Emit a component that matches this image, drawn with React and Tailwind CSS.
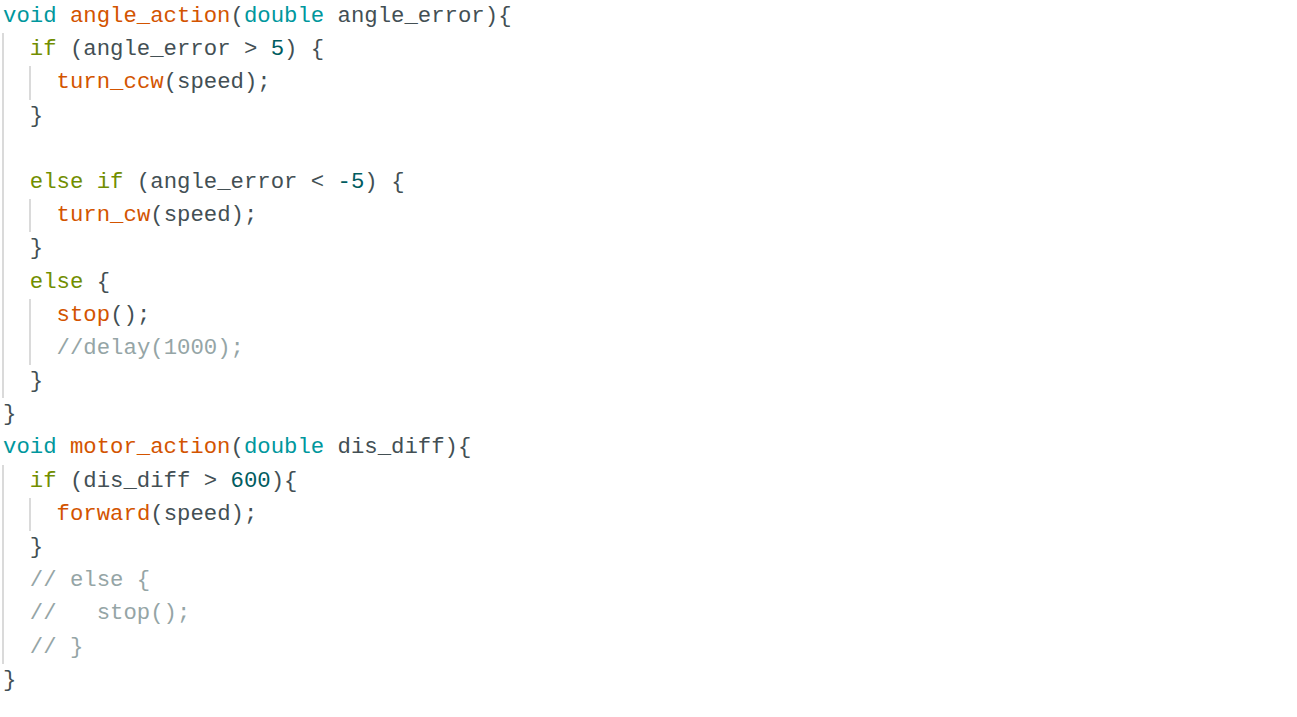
import React from "react";

const K = ({ children }) => <span className="text-[#00979D]">{children}</span>;
const C = ({ children }) => <span className="text-[#728E00]">{children}</span>;
const F = ({ children }) => <span className="text-[#D35400]">{children}</span>;
const N = ({ children }) => <span className="text-[#005C5F]">{children}</span>;
const R = ({ children }) => <span className="text-[#95A5A6]">{children}</span>;

const Line = ({ children }) => (
  <div className="h-[33.2px] leading-[33.2px] whitespace-pre">{children}</div>
);

const Block = ({ children }) => (
  <div className="-ml-[1px] border-l-2 border-[#dadada] pl-[25.8px]">{children}</div>
);

const App = () => {
  return (
    <div
      className="w-[1297px] h-[717px] bg-white px-[3px] text-[22.3px] text-[#434F54] overflow-hidden"
      style={{ fontFamily: '"Liberation Mono", "DejaVu Sans Mono", monospace' }}
    >
      <Line>
        <K>void</K> <F>angle_action</F>(<K>double</K> angle_error){"{"}
      </Line>
      <Block>
        <Line>
          <C>if</C> (angle_error {">"} <N>5</N>) {"{"}
        </Line>
        <Block>
          <Line>
            <F>turn_ccw</F>(speed);
          </Line>
        </Block>
        <Line>{"}"}</Line>
        <Line> </Line>
        <Line>
          <C>else</C> <C>if</C> (angle_error {"<"} <N>-5</N>) {"{"}
        </Line>
        <Block>
          <Line>
            <F>turn_cw</F>(speed);
          </Line>
        </Block>
        <Line>{"}"}</Line>
        <Line>
          <C>else</C> {"{"}
        </Line>
        <Block>
          <Line>
            <F>stop</F>();
          </Line>
          <Line>
            <R>//delay(1000);</R>
          </Line>
        </Block>
        <Line>{"}"}</Line>
      </Block>
      <Line>{"}"}</Line>
      <Line>
        <K>void</K> <F>motor_action</F>(<K>double</K> dis_diff){"{"}
      </Line>
      <Block>
        <Line>
          <C>if</C> (dis_diff {">"} <N>600</N>){"{"}
        </Line>
        <Block>
          <Line>
            <F>forward</F>(speed);
          </Line>
        </Block>
        <Line>{"}"}</Line>
        <Line>
          <R>// else {"{"}</R>
        </Line>
        <Line>
          <R>//   stop();</R>
        </Line>
        <Line>
          <R>// {"}"}</R>
        </Line>
      </Block>
      <Line>{"}"}</Line>
    </div>
  );
};

export default App;
